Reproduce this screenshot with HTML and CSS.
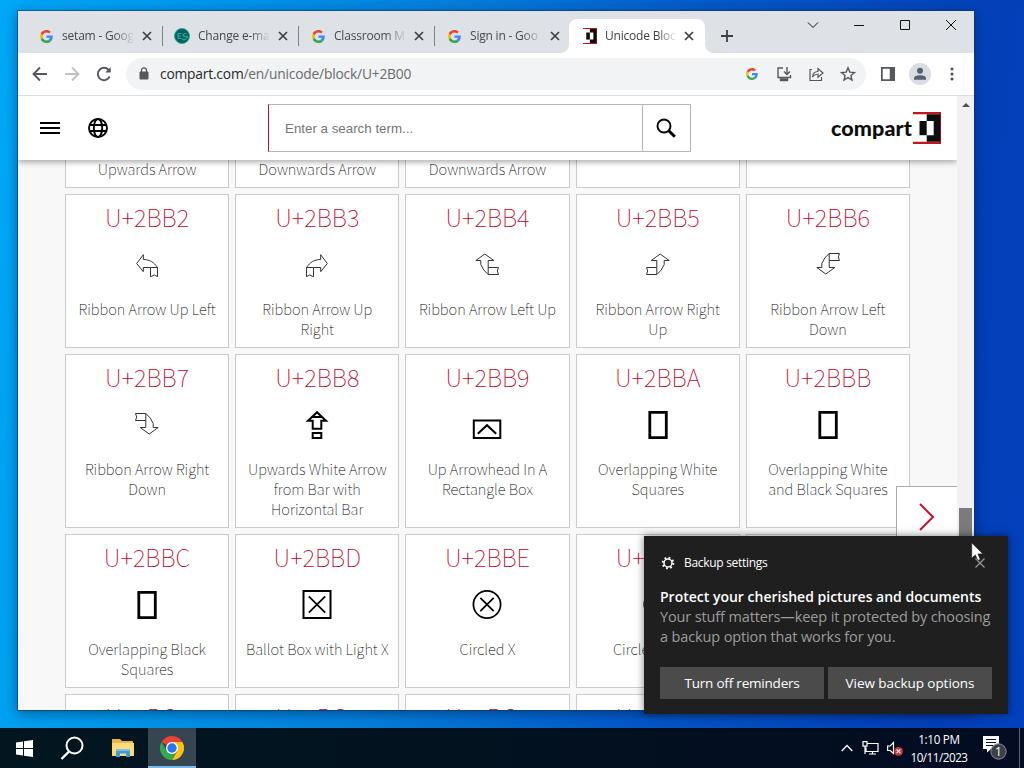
FILE: index.html
```html
<!DOCTYPE html>
<html lang="en">
<head>
<meta charset="utf-8">
<title>Unicode Block</title>
<link rel="stylesheet" href="styles.css">
</head>
<body>
<svg width="0" height="0" class="defs">
  <defs>
    <symbol id="g" viewBox="0 0 48 48"><path fill="#ea4335" d="M24 9.5c3.5 0 6.700 1.200 9.200 3.600l6.900-6.900C35.900 2.400 30.500 0 24 0 14.600 0 6.500 5.400 2.600 13.200l8 6.200C12.400 13.700 17.700 9.500 24 9.500z"/><path fill="#4285f4" d="M47 24.600c0-1.600-.2-3.100-.4-4.600H24v9h12.900c-.6 3-2.200 5.500-4.700 7.200l7.700 6C44.400 38 47 31.800 47 24.600z"/><path fill="#fbbc05" d="M10.500 28.600c-.5-1.500-.8-3-.8-4.600s.3-3.100.8-4.600l-8-6.200C.9 16.500 0 20.100 0 24s.9 7.500 2.600 10.800z"/><path fill="#34a853" d="M24 48c6.500 0 11.900-2.100 15.900-5.800l-7.700-6c-2.200 1.500-4.900 2.300-8.200 2.300-6.300 0-11.600-4.200-13.500-9.900l-8 6.200C6.500 42.600 14.600 48 24 48z"/></symbol>
    <symbol id="x" viewBox="0 0 10 10"><path d="M1 1l8 8M9 1l-8 8" stroke="#3c4043" stroke-width="1.7" fill="none"/></symbol>
    <symbol id="mark" viewBox="0 0 28 32"><path fill="#c8141c" d="M0 0h28v32H0v-2.200h26.500V2.200H0z"/><path fill="#0d0d0d" d="M13.700 2.200h13.600v27.600H13.700v-6.600h7V9h-7z"/><path fill="#0d0d0d" d="M6.500 9h7.200v14.200H6.500z"/></symbol>
    <symbol id="ribbonA" viewBox="0 0 32 32"><path class="thin" d="M5.700 13.500 12.300 4.700V9.500C19 9.500 23 12.500 26.500 17.500V26.700L23.300 25 19.500 26.700V17.500H12.300V21.700ZM19.500 17.500H26.500"/></symbol>
    <symbol id="ribbonB" viewBox="0 0 32 32"><path class="thin" d="M13.800 4 4.800 10.500H9.800V14.500Q12 20.500 17.200 24.500H27.500L26.300 21 27.500 17.500H17.200V10.500H22.800ZM17.200 17.500V24.500"/></symbol>
    <symbol id="tofu" viewBox="0 0 32 32"><path class="bold" d="M7.800 2.400h16.500v25.300H7.800z"/></symbol>
  </defs>
</svg>
<div class="desktop">
  <section class="window">
    <div class="tabstrip">
      <div class="tab"><svg class="fav"><use href="#g"/></svg><span class="ttl">setam - Goog</span><svg class="cls"><use href="#x"/></svg></div>
      <div class="tab"><svg class="fav big" viewBox="0 0 16 16"><circle cx="8" cy="8" r="7.500" fill="#0b5d60" stroke="#2ba58f"/><path d="M7.300 5.500H4v5h3.300M4 8h3M12.300 5.700q-3.300-.5-3.300 1.200t3.200 1.500-.3 2.300-3.200-.2" fill="none" stroke="#25a798" stroke-width="1.200"/></svg><span class="ttl">Change e-ma</span><svg class="cls"><use href="#x"/></svg></div>
      <div class="tab"><svg class="fav"><use href="#g"/></svg><span class="ttl">Classroom M</span><svg class="cls"><use href="#x"/></svg></div>
      <div class="tab last"><svg class="fav"><use href="#g"/></svg><span class="ttl">Sign in - Goo</span><svg class="cls"><use href="#x"/></svg></div>
      <div class="tab active"><svg class="fav mk"><use href="#mark"/></svg><span class="ttl">Unicode Bloc</span><svg class="cls"><use href="#x"/></svg></div>
      <svg class="plus" viewBox="0 0 12 12"><path d="M6 0v12M0 6h12" stroke="#3c4043" stroke-width="1.800"/></svg>
      <div class="controls">
        <svg viewBox="0 0 12 12"><path d="M1 3.500l5 5 5-5"/></svg>
        <svg viewBox="0 0 12 12"><path d="M1 6.500h10"/></svg>
        <svg viewBox="0 0 12 12"><path d="M1.500 1.500h9v9h-9z"/></svg>
        <svg viewBox="0 0 12 12"><path d="M1 1l10 10M11 1L1 11"/></svg>
      </div>
    </div>
    <div class="toolbar">
      <svg class="ic" viewBox="0 0 16 16"><path d="M15 8H2M8 1.500L1.500 8 8 14.500"/></svg>
      <svg class="ic dim" viewBox="0 0 16 16"><path d="M1 8h13M8 1.500L14.500 8 8 14.500"/></svg>
      <svg class="ic" viewBox="0 0 16 16"><path d="M13.700 10.500A6.200 6.200 0 1 1 12.600 3.800L14 5.500"/><path d="M14.700 1v5.500H9.200z" fill="#55585c" stroke="none"/></svg>
      <div class="omni">
        <svg class="lock" viewBox="0 0 10 13"><path d="M1 5h8v7H1z" fill="#55585c" stroke="#55585c"/><path d="M2.500 5V3.300a2.500 2.500 0 0 1 5 0V5" fill="none" stroke="#55585c" stroke-width="1.300"/></svg>
        <span class="url"><b>compart.com</b>/en/unicode/block/U+2B00</span>
        <svg class="gi"><use href="#g"/></svg>
        <svg class="oi" viewBox="0 0 16 16"><path d="M7 2H2v9.500h12.500V9M11 1v7M8 5.500l3 3 3-3"/><path d="M4.500 13h7v1.500h-7z"/></svg>
        <svg class="oi" viewBox="0 0 16 16"><path d="M4 3.500H2v11h11.500V11M4.500 11q.5-5.500 5.500-5.500V2.500L15 7l-5 4.200V8.300Q6.500 8 4.500 11z" stroke-width="1.200"/></svg>
        <svg class="oi" viewBox="0 0 16 16"><path d="M8 1.800l1.800 4.300 4.700.4-3.600 3 1.100 4.600L8 11.600l-4 2.500 1.100-4.600-3.600-3 4.700-.4z"/></svg>
      </div>
      <svg class="ic side" viewBox="0 0 16 16"><path d="M0 0h16v16H0z" fill="#55585c" stroke="none"/><path d="M2 2h8v12H2z" fill="#fff" stroke="none"/></svg>
      <svg class="ava" viewBox="0 0 22 22"><circle cx="11" cy="11" r="11" fill="#d9dde3"/><circle cx="11" cy="7.800" r="3" fill="#55606e"/><path d="M5 16.800v-1.500q0-3 6-3t6 3v1.500z" fill="#55606e"/></svg>
      <svg class="dots" viewBox="0 0 4 14"><circle cx="2" cy="2" r="1.500"/><circle cx="2" cy="7" r="1.500"/><circle cx="2" cy="12" r="1.500"/></svg>
    </div>
    <div class="body">
      <div class="page">
        <header class="head">
          <svg class="menu" viewBox="0 0 20 12"><path d="M0 1h20M0 6h20M0 11h20" stroke="#000" stroke-width="2"/></svg>
          <svg class="globe" viewBox="0 0 20 20"><g fill="none" stroke="#000" stroke-width="1.900"><circle cx="10" cy="10" r="9"/><ellipse cx="10" cy="10" rx="4.200" ry="9"/><path d="M1.500 7h17M1.500 13h17"/></g></svg>
          <div class="search"><span class="ph">Enter a search term...</span><span class="go"><svg viewBox="0 0 20 20"><g fill="none" stroke="#000"><circle cx="8" cy="8" r="6.500" stroke-width="1.900"/><path d="M12.800 12.800l6 6" stroke-width="3"/></g></svg></span></div>
          <div class="logo"><span>compart</span><svg><use href="#mark"/></svg></div>
        </header>
        <main class="main">
          <div class="grid">
            <div class="card cut"><p>Upwards Arrow</p></div>
            <div class="card cut"><p>Downwards Arrow</p></div>
            <div class="card cut"><p>Downwards Arrow</p></div>
            <div class="card cut"></div>
            <div class="card cut"></div>

            <div class="card"><h2>U+2BB2</h2><svg><use href="#ribbonA"/></svg><p>Ribbon Arrow Up Left</p></div>
            <div class="card"><h2>U+2BB3</h2><svg class="fx"><use href="#ribbonA"/></svg><p>Ribbon Arrow Up<br>Right</p></div>
            <div class="card"><h2>U+2BB4</h2><svg><use href="#ribbonB"/></svg><p>Ribbon Arrow Left Up</p></div>
            <div class="card"><h2>U+2BB5</h2><svg class="fx"><use href="#ribbonB"/></svg><p>Ribbon Arrow Right<br>Up</p></div>
            <div class="card"><h2>U+2BB6</h2><svg viewBox="0 0 32 32"><use href="#ribbonB" transform="translate(0 28) scale(1 -1)" width="32" height="32"/></svg><p>Ribbon Arrow Left<br>Down</p></div>

            <div class="card"><h2>U+2BB7</h2><svg class="fx" viewBox="0 0 32 32"><use href="#ribbonB" transform="translate(0 28) scale(1 -1)" width="32" height="32"/></svg><p>Ribbon Arrow Right<br>Down</p></div>
            <div class="card"><h2>U+2BB8</h2><svg viewBox="0 0 32 32"><path class="mid" d="M16 2.200L7 10.700h4.700v8h8.600v-8H25zM11.500 7h9M11.700 23h8.600v5h-8.600z"/></svg><p>Upwards White Arrow<br>from Bar with<br>Horizontal Bar</p></div>
            <div class="card"><h2>U+2BB9</h2><svg viewBox="0 0 32 32"><path class="mid" d="M2.800 10.500h26.500v17.500H2.800zM6.800 23.800l9.200-8.600 9.200 8.600"/></svg><p>Up Arrowhead In A<br>Rectangle Box</p></div>
            <div class="card"><h2>U+2BBA</h2><svg><use href="#tofu"/></svg><p>Overlapping White<br>Squares</p></div>
            <div class="card"><h2>U+2BBB</h2><svg><use href="#tofu"/></svg><p>Overlapping White<br>and Black Squares</p></div>

            <div class="card"><h2>U+2BBC</h2><svg><use href="#tofu"/></svg><p>Overlapping Black<br>Squares</p></div>
            <div class="card"><h2>U+2BBD</h2><svg viewBox="0 0 32 32"><path class="mid" d="M2.500 1h27v27h-27z"/><path class="mid lt" d="M7.800 6.300l16.400 16.400M24.200 6.300L7.800 22.700"/></svg><p>Ballot Box with Light X</p></div>
            <div class="card"><h2>U+2BBE</h2><svg viewBox="0 0 32 32"><circle class="mid lt" cx="16" cy="14.500" r="13.600"/><path class="mid lt" d="M9.300 7.800l13.400 13.400M22.700 7.800L9.300 21.200"/></svg><p>Circled X</p></div>
            <div class="card"><h2>U+2BBF</h2><svg viewBox="0 0 32 32"><circle class="mid" cx="16" cy="14.500" r="13.600"/><path class="bold" d="M9.300 7.800l13.400 13.400M22.700 7.800L9.300 21.200"/></svg><p>Circled Bold X</p></div>
            <div class="card"><h2>U+2BC0</h2></div>

            <div class="card"><h2>U+2BC1</h2></div>
            <div class="card"><h2>U+2BC2</h2></div>
            <div class="card"><h2>U+2BC3</h2></div>
            <div class="card"><h2>U+2BC4</h2></div>
            <div class="card"><h2>U+2BC5</h2></div>
          </div>
        </main>
        <div class="next"><svg viewBox="0 0 16 28"><path d="M1 1l13 13L1 27" fill="none" stroke="#c4122f" stroke-width="2"/></svg></div>
      </div>
      <div class="scroll"><i class="up"></i><i class="thumb"></i></div>
    </div>
  </section>

  <footer class="taskbar">
    <div class="tb"><svg width="17" height="17" viewBox="0 0 17 17"><path fill="#fff" d="M0 2.500l7-1v6.500H0zM8 1.300L17 0v8H8zM0 9h7v6.500l-7-1zM8 9h9v8l-9-1.300z"/></svg></div>
    <div class="tb"><svg width="24" height="24" viewBox="0 0 24 24"><g fill="none" stroke="#fff" stroke-width="2"><circle cx="14.500" cy="9.500" r="8"/><path d="M9 15.500L1.500 23" stroke-width="2.400"/></g></svg></div>
    <div class="tb ex"><svg width="22" height="20" viewBox="0 0 22 20"><path fill="#e9b44c" d="M0 1h8l2 2h11v5H0z"/><path fill="#fbdb7c" d="M0 5h22v13H0z"/><path fill="#3f9bd8" d="M4 11h14v8h-4v-3.500H8V19H4z"/><path fill="#77bfe9" d="M4 11h14v2H4z"/></svg></div>
    <div class="tb on"><svg width="24" height="24" viewBox="0 0 24 24"><path fill="#ea4335" d="M12 12L1.600 6A12 12 0 0 1 22.400 6H12z"/><path fill="#fbc116" d="M12 12V6h10.400A12 12 0 0 1 12 24l5.200-9z"/><path fill="#34a853" d="M12 12l5.200 3L12 24A12 12 0 0 1 1.600 6l5.200 9z"/><circle cx="12" cy="12" r="6" fill="#fff"/><circle cx="12" cy="12" r="4.700" fill="#2d74e8"/></svg></div>
    <div class="tray">
      <svg width="12" height="8" viewBox="0 0 12 8"><path d="M.7 7L6 1.500 11.300 7" fill="none" stroke="#fff" stroke-width="1.300"/></svg>
      <svg class="net" width="17" height="14" viewBox="0 0 17 14"><path d="M5 2.500h11v8H4V6.500M7 13h7M10.500 10.500V13M1 .7h4v4.500H1zM3 5v8" fill="none" stroke="#fff" stroke-width="1.200"/></svg>
      <svg class="vol" width="16" height="15" viewBox="0 0 16 15"><path d="M.6 5h2.600L6.500 1.500v11L3.200 9.500H.6z" fill="none" stroke="#fff" stroke-width="1.200"/><circle cx="11.500" cy="10.300" r="4.400" fill="#d5333c"/><path d="M9.600 8.400l3.800 3.800M13.400 8.400l-3.800 3.800" stroke="#fff" stroke-width="1.200"/></svg>
      <div class="clock"><span class="tm">1:10 PM</span><span>10/11/2023</span></div>
      <div class="note"><svg width="26" height="26" viewBox="0 0 26 26"><path fill="#fff" d="M1 1h16v13H9l-4 3.500V14H1z"/><path d="M4 4.500h10M4 7.500h10M4 10.500h7" stroke="#05101f" stroke-width="1.200"/><circle cx="16.500" cy="16.500" r="7.700" fill="#3c4048" stroke="#8b8f96"/></svg><em>1</em></div>
    </div>
  </footer>

  <aside class="toast">
    <div class="thead"><svg width="14" height="14" viewBox="0 0 14 14"><circle cx="7" cy="7" r="4" fill="none" stroke="#fff" stroke-width="1.500"/><circle cx="7" cy="7" r="5.300" fill="none" stroke="#fff" stroke-width="2" stroke-dasharray="1.700 2.460"/></svg><span>Backup settings</span><svg class="tx" width="10" height="10" viewBox="0 0 10 10"><path d="M.5.5l9 9M9.500.5l-9 9" stroke="#9a9a9a" stroke-width="1.200"/></svg></div>
    <strong>Protect your cherished pictures and documents</strong>
    <p>Your stuff matters—keep it protected by choosing<br>a backup option that works for you.</p>
    <div class="btns"><button class="b1">Turn off reminders</button><button>View backup options</button></div>
  </aside>
  <svg class="cursor" width="13" height="20" viewBox="0 0 13 20"><path d="M.7.8v15.500l3.600-3.400 2.500 5.600 2.500-1.100-2.400-5.500h5z" fill="#fff" stroke="#222" stroke-width=".7"/></svg>
</div>
</body>
</html>
```
FILE: styles.css
```css
* { box-sizing: border-box; }
body { margin: 0; font-family: "Open Sans", "Noto Sans", sans-serif; }
.defs { position: absolute; }
.desktop {
  position: relative; width: 1024px; height: 768px; overflow: hidden;
  display: flex; flex-direction: column; justify-content: flex-end;
  background: linear-gradient(97deg, #00a8f8 0%, #0098ea 18%, #0480dd 40%, #0358c8 65%, #0340b8 90%, #0340bc 100%);
}
.thin { fill: none; stroke: #333; stroke-width: 1; }
.mid { fill: none; stroke: #000; stroke-width: 2; }
.mid.lt { stroke-width: 1.7; }
.bold { fill: none; stroke: #000; stroke-width: 2.8; }

.window {
  position: absolute; left: 18px; top: 11px; width: 956px; height: 699px;
  display: flex; flex-direction: column; background: #fff;
  box-shadow: 0 0 0 1px rgba(20, 50, 90, .55), 0 3px 12px rgba(0, 20, 60, .5);
}
.tabstrip { height: 42px; flex: none; display: flex; background: #dee1e6; padding-top: 8px; }
.tab { width: 136px; height: 34px; display: flex; align-items: center; padding-left: 21px; position: relative; }
.tab:first-child { margin-left: 1px; }
.tab:not(.last):not(.active)::after { content: ""; position: absolute; left: 143px; top: 7px; width: 1px; height: 20px; background: #7e8287; }
.fav { width: 13px; height: 13px; margin-right: 9px; flex: none; }
.fav.big { width: 16px; height: 16px; margin: 0 8px 0 -2px; }
.fav.mk { width: 14px; height: 16px; margin-right: 8px; }
.ttl {
  width: 74px; flex: none; overflow: hidden; white-space: nowrap; font-size: 12px; line-height: 18px;
  color: #45494d; letter-spacing: -.2px;
  -webkit-mask-image: linear-gradient(90deg, #000 70%, transparent 98%);
  mask-image: linear-gradient(90deg, #000 70%, transparent 98%);
}
.tab .cls { width: 10px; height: 10px; margin-left: 6px; flex: none; }
.tab.last { width: 135px; }
.tab.active { background: #fff; border-radius: 8px 8px 0 0; margin-left: 7px; width: 136px; padding-left: 14px; }
.tab.active::before { content: ""; position: absolute; left: -8px; bottom: 0; width: 8px; height: 8px; background: radial-gradient(circle at 0 0, transparent 7.5px, #fff 8px); }
.tab.active::after { content: ""; position: absolute; right: -8px; bottom: 0; width: 8px; height: 8px; background: radial-gradient(circle at 100% 0, transparent 7.5px, #fff 8px); }
.tab.active .ttl { color: #3c4043; }
.tab.active .cls { margin-left: 5px; }
.plus { width: 12px; height: 12px; margin: 11px 0 0 16px; flex: none; }
.controls { margin: -8px 0 0 auto; display: flex; height: 28px; }
.controls svg { width: 46px; height: 12px; margin-top: 8px; fill: none; stroke: #111; stroke-width: 1; }

.toolbar { height: 43px; flex: none; display: flex; align-items: center; padding: 0 0 1px 14px; border-bottom: 1px solid #dcdfe2; }
.ic { width: 16px; height: 16px; margin-right: 16px; fill: none; stroke: #55585c; stroke-width: 1.9; flex: none; }
.ic.dim { stroke: #bfc1c4; }
.omni { width: 740px; height: 32px; margin-left: -2px; border-radius: 16px; background: #f1f3f4; display: flex; align-items: center; padding-left: 13px; }
.lock { width: 10px; height: 13px; margin-right: 11px; }
.url { font-size: 13.8px; color: #686c70; letter-spacing: -.2px; white-space: nowrap; margin-right: auto; }
.url b { font-weight: 400; color: #26292c; }
.gi { width: 12px; height: 12px; margin-right: 18px; }
.oi { width: 16px; height: 16px; margin-right: 16px; fill: none; stroke: #55585c; stroke-width: 1.4; }
.oi:last-child { margin-right: 10px; }
.ic.side { width: 14px; height: 14px; margin: 0 14px 0 15px; }
.ava { width: 22px; height: 22px; flex: none; }
.dots { width: 4px; height: 14px; margin-left: 19px; fill: #4a4d51; }

.body { flex: 1; min-height: 0; display: flex; }
.page { width: 939px; position: relative; display: flex; flex-direction: column; background: #f8f8f8; overflow: hidden; }
.head { height: 64px; flex: none; background: #fff; box-shadow: 0 2px 6px rgba(0, 0, 0, .35); position: relative; z-index: 2; display: flex; align-items: center; padding-left: 22px; }
.menu { width: 20px; height: 12px; }
.globe { width: 20px; height: 20px; margin-left: 28px; }
.search { width: 423px; height: 48px; margin-left: 160px; border: 1px solid #b5b5b5; border-left-color: #b0122a; display: flex; }
.ph { flex: 1; font: 13.33px/48px "Liberation Sans", Arial, sans-serif; color: #757575; padding-left: 16px; }
.go { width: 48px; border-left: 1px solid #b5b5b5; display: flex; align-items: center; justify-content: center; }
.go svg { width: 20px; height: 20px; margin-right: 2px; }
.logo { margin-left: 140px; display: flex; align-items: center; width: 111px; }
.logo span { width: 82px; font: 900 21.5px/28px Lato, sans-serif; color: #0d0d0d; letter-spacing: .1px; white-space: nowrap; }
.logo svg { width: 28px; height: 32px; flex: none; }
.main { flex: 1; overflow: hidden; padding: 0 48px 0 47px; min-height: 0; }
.grid { width: 845px; display: grid; grid-template-columns: repeat(5, 1fr); grid-template-rows: 28px 154px 174px 154px 154px; gap: 6px; }
.card { background: #fff; border: 1px solid #ccc; display: flex; flex-direction: column; align-items: center; text-align: center; font-family: "Noto Sans CJK SC", sans-serif; font-weight: 100; }
.card.cut { border-top: 0; }
.card.cut p { margin-top: -1px; }
.card h2 { margin: 0; height: 55px; font-size: 23.9px; line-height: 43px; font-weight: 100; color: #c4001f; }
.card svg { width: 32px; height: 32px; margin-bottom: 17px; }
.card p { margin: 0; font-size: 14.7px; line-height: 20px; white-space: nowrap; color: #000; }
.fx { transform: scaleX(-1); }
.next { position: absolute; right: 0; top: 390px; width: 61px; height: 61px; background: #fff; border: 1px solid #aaa; border-right: 0; z-index: 3; display: flex; align-items: center; justify-content: center; }
.next svg { width: 16px; height: 28px; }
.scroll { flex: 1; background: #f1f1f1; display: flex; flex-direction: column; align-items: center; }
.up { margin-top: 7px; border: 4px solid transparent; border-top: 0; border-bottom: 4px solid #505050; }
.thumb { width: 13px; height: 90px; margin-top: 401px; margin-right: 1px; background: #7b7b7b; }

.taskbar { height: 40px; display: flex; background: linear-gradient(90deg, #021620, #02131f 40%, #030e20 75%, #030c22); border-right: 4px solid #030c22; }
.tb { width: 48px; display: flex; align-items: center; justify-content: center; }
.tb.ex { width: 52px; padding-left: 2px; }
.tb.on { background: #36454f; border-bottom: 2px solid #76b9ed; padding-top: 2px; }
.tray { margin-left: auto; display: flex; align-items: center; color: #fff; width: 179px; border-right: 1px solid #5b6270; }
.tray svg { flex: none; }
.net { margin-left: 9px; }
.vol { margin-left: 8px; }
.clock { width: 72px; margin-left: 0; font-size: 11.7px; line-height: 18px; display: flex; flex-direction: column; align-items: center; }
.clock span { letter-spacing: -.5px; white-space: nowrap; }
.clock .tm { letter-spacing: -.3px; }
.note { margin-left: 7px; width: 26px; height: 26px; position: relative; }
.note svg { display: block; }
.note em { position: absolute; left: 13px; top: 8px; font: 12px/17px "Open Sans", sans-serif; }

.toast { position: absolute; z-index: 5; left: 644px; top: 536px; width: 364px; height: 178px; background: #1f1f1f; padding: 16px 16px 15px; box-shadow: 0 0 8px rgba(0, 0, 0, .5); color: #fff; }
.thead { display: flex; align-items: center; height: 21px; font-size: 12px; }
.thead span { margin-left: 9px; letter-spacing: -.3px; }
.thead svg { margin-left: 1px; }
.thead .tx { margin-left: auto; margin-right: 7px; }
.toast strong { display: block; margin-top: 14px; font-size: 14px; font-weight: 600; line-height: 20px; white-space: nowrap; }
.toast p { margin: 0; font-size: 14.5px; line-height: 20px; letter-spacing: -.13px; color: #9c9c9c; white-space: nowrap; }
.btns { display: flex; gap: 4px; margin-top: 20px; }
.btns button { flex: 1; height: 32px; border: 0; padding: 0; background: #4b4b4b; color: #fff; font: 13.5px/32px "Open Sans", sans-serif; letter-spacing: -.05px; white-space: nowrap; }
.btns .b1 { letter-spacing: -.2px; }
.cursor { position: absolute; z-index: 6; left: 971px; top: 542px; }
```
